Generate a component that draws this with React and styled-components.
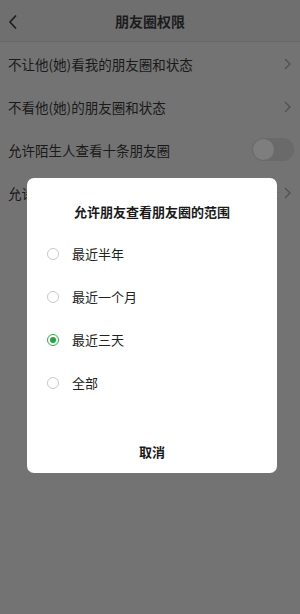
import React from "react";
import styled, { createGlobalStyle } from "styled-components";

const GlobalStyle = createGlobalStyle`
  html, body {
    margin: 0;
    padding: 0;
    background: #737373;
  }
  body {
    font-family: "Noto Sans CJK SC", "Noto Sans", sans-serif;
    width: 300px;
    height: 614px;
    overflow: hidden;
  }
`;

const rows = [
  { label: "不让他(她)看我的朋友圈和状态", type: "arrow" },
  { label: "不看他(她)的朋友圈和状态", type: "arrow" },
  { label: "允许陌生人查看十条朋友圈", type: "switch" },
  { label: "允许朋友查看朋友圈的范围", type: "arrow", value: "最近三天" },
];

const options = ["最近半年", "最近一个月", "最近三天", "全部"];

export default function App() {
  return (
    <>
      <GlobalStyle />
      <Page>
        <Header>
          <Back>
            <svg width="10" height="16" viewBox="0 0 10 16">
              <path d="M8 1.5 L2 8 L8 14.5" fill="none" stroke="#1c1c1c" strokeWidth="1.6" />
            </svg>
          </Back>
          <Title>朋友圈权限</Title>
        </Header>
        {rows.map((r) => (
          <Row key={r.label}>
            <RowLabel>{r.label}</RowLabel>
            {r.type === "switch" ? (
              <Switch>
                <Knob />
              </Switch>
            ) : (
              <RowRight>
                {r.value && <RowValue>{r.value}</RowValue>}
                <svg width="7" height="12" viewBox="0 0 7 12">
                  <path d="M1 1 L6 6 L1 11" fill="none" stroke="#505050" strokeWidth="1.3" />
                </svg>
              </RowRight>
            )}
          </Row>
        ))}
      </Page>
      <Overlay>
        <Dialog>
          <DialogTitle>允许朋友查看朋友圈的范围</DialogTitle>
          <OptionList>
            {options.map((o) => (
              <Option key={o}>
                <Radio $checked={o === "最近三天"} />
                <OptionText>{o}</OptionText>
              </Option>
            ))}
          </OptionList>
          <Cancel>取消</Cancel>
        </Dialog>
      </Overlay>
    </>
  );
}

const Page = styled.div`
  width: 300px;
  height: 614px;
  background: #737373;
`;

const Header = styled.div`
  position: relative;
  height: 41px;
  display: flex;
  align-items: center;
  justify-content: center;
  background: #6f6f6f;
  border-bottom: 1px solid #686868;
`;

const Back = styled.div`
  position: absolute;
  left: 8px;
  top: 14px;
  display: flex;
`;

const Title = styled.div`
  font-size: 14px;
  font-weight: 700;
  color: #1c1c1c;
`;

const Row = styled.div`
  height: 43px;
  display: flex;
  align-items: center;
  justify-content: space-between;
  padding: 0 8px;
`;

const RowLabel = styled.div`
  font-size: 13.5px;
  color: #1a1a1a;
`;

const RowRight = styled.div`
  display: flex;
  align-items: center;
  gap: 6px;
  margin-right: 1px;
`;

const RowValue = styled.span`
  font-size: 12px;
  color: #4a4a4a;
`;

const Switch = styled.div`
  width: 40px;
  height: 23px;
  border-radius: 12px;
  background: #6a6a6a;
  display: flex;
  align-items: center;
  padding: 0 1px;
  margin-right: -2px;
`;

const Knob = styled.div`
  width: 21px;
  height: 21px;
  border-radius: 50%;
  background: #7e7e7e;
`;

const Overlay = styled.div`
  position: fixed;
  inset: 0;
  display: flex;
  justify-content: flex-start;
  align-items: flex-start;
  padding: 178px 0 0 27px;
`;

const Dialog = styled.div`
  width: 250px;
  height: 295px;
  background: #fff;
  border-radius: 7px;
  display: flex;
  flex-direction: column;
  box-sizing: border-box;
  padding-top: 24px;
`;

const DialogTitle = styled.div`
  text-align: center;
  font-size: 13px;
  font-weight: 700;
  line-height: 20px;
  color: #1a1a1a;
`;

const OptionList = styled.div`
  margin-top: 10px;
  display: flex;
  flex-direction: column;
`;

const Option = styled.div`
  height: 43px;
  display: flex;
  align-items: center;
  padding-left: 20px;
`;

const Radio = styled.span`
  width: 12px;
  height: 12px;
  border-radius: 50%;
  box-sizing: border-box;
  border: 1.5px solid ${(p) => (p.$checked ? "#2aae43" : "#c9c9c9")};
  display: flex;
  align-items: center;
  justify-content: center;
  &::after {
    content: "";
    width: 6px;
    height: 6px;
    border-radius: 50%;
    background: ${(p) => (p.$checked ? "#1fa83a" : "transparent")};
  }
`;

const OptionText = styled.span`
  margin-left: 13px;
  font-size: 13px;
  color: #222;
`;

const Cancel = styled.div`
  margin-top: auto;
  height: 44px;
  display: flex;
  align-items: center;
  justify-content: center;
  font-size: 13px;
  font-weight: 700;
  color: #1a1a1a;
`;
